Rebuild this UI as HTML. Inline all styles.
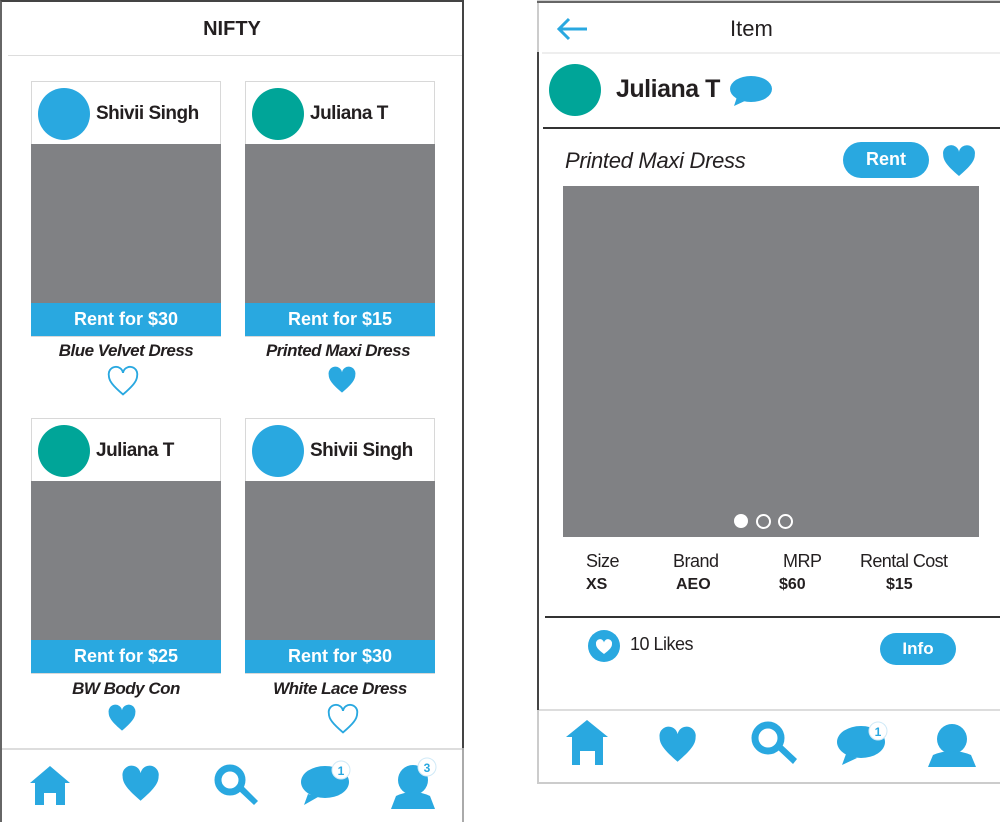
<!DOCTYPE html>
<html><head><meta charset="utf-8"><style>
*{margin:0;padding:0;box-sizing:border-box}
body{width:1000px;height:822px;background:#fff;position:relative;overflow:hidden;font-family:"Liberation Sans",sans-serif;color:#231f20}
.a{position:absolute}
.t{position:absolute;white-space:nowrap}
.card{position:absolute;width:190px;height:256px;border:1px solid #d8d8d8;background:#fff}
.card .av{position:absolute;left:6px;top:6px;width:52px;height:52px;border-radius:50%}
.card .nm{position:absolute;left:64px;top:21px;font-size:19px;font-weight:bold;letter-spacing:-0.5px}
.card .img{position:absolute;left:-1px;top:62px;width:190px;height:160px;background:#808184}
.card .bar{position:absolute;left:-1px;top:221px;width:190px;height:33px;background:#29a8e0;color:#fff;font-size:18px;font-weight:bold;text-align:center;line-height:33px}
.cap{position:absolute;width:190px;text-align:center;font-size:17px;font-style:italic;font-weight:bold;letter-spacing:-0.5px}
</style></head><body>
<svg width="0" height="0" style="position:absolute"><defs>
<path id="h" d="M12 21.5C5 15.5 2 12 2 8a5 5 0 0 1 10-1.8A5 5 0 0 1 22 8c0 4-3 7.5-10 13.5z"/>
</defs></svg>

<!-- LEFT PHONE -->
<div class="a" style="left:0;top:0;width:464px;height:822px;border:2px solid #444;border-bottom:none;border-left:2px solid #666"></div>
<div class="a" style="left:462px;top:748px;width:2px;height:74px;background:#aaa"></div>
<div class="t" style="left:0;width:464px;text-align:center;top:18px;font-size:20px;font-weight:bold">NIFTY</div>
<div class="a" style="left:8px;top:55px;width:454px;height:1px;background:#ddd"></div>

<div class="card" style="left:31px;top:81px"><div class="av" style="background:#29a8e0"></div><div class="nm">Shivii Singh</div><div class="img"></div><div class="bar">Rent for $30</div></div>
<div class="cap" style="left:31px;top:341px">Blue Velvet Dress</div>
<svg class="a" style="left:106px;top:364px" width="34" height="34" viewBox="0 0 24 24"><use href="#h" fill="none" stroke="#29a8e0" stroke-width="1.3"/></svg>

<div class="card" style="left:245px;top:81px"><div class="av" style="background:#00a598"></div><div class="nm">Juliana T</div><div class="img"></div><div class="bar">Rent for $15</div></div>
<div class="cap" style="left:243px;top:341px">Printed Maxi Dress</div>
<svg class="a" style="left:326px;top:364px" width="32" height="32" viewBox="0 0 24 24"><use href="#h" fill="#29a8e0"/></svg>

<div class="card" style="left:31px;top:418px"><div class="av" style="background:#00a598"></div><div class="nm">Juliana T</div><div class="img"></div><div class="bar">Rent for $25</div></div>
<div class="cap" style="left:31px;top:679px">BW Body Con</div>
<svg class="a" style="left:106px;top:702px" width="32" height="32" viewBox="0 0 24 24"><use href="#h" fill="#29a8e0"/></svg>

<div class="card" style="left:245px;top:418px"><div class="av" style="background:#29a8e0"></div><div class="nm">Shivii Singh</div><div class="img"></div><div class="bar">Rent for $30</div></div>
<div class="cap" style="left:245px;top:679px">White Lace Dress</div>
<svg class="a" style="left:326px;top:702px" width="34" height="34" viewBox="0 0 24 24"><use href="#h" fill="none" stroke="#29a8e0" stroke-width="1.3"/></svg>

<div class="a" style="left:2px;top:748px;width:460px;height:2px;background:#ddd"></div>
<svg class="a" style="left:0;top:750px" width="462" height="72" viewBox="0 0 462 72">
 <g fill="#29a8e0">
  <path d="M30 33 L50 16 L70 33 L65 33 L65 55 L56 55 L56 43 L44 43 L44 55 L35 55 L35 33 Z"/>
  <use href="#h" transform="translate(119 12) scale(1.8)"/>
  <circle cx="230" cy="30" r="12" fill="none" stroke="#29a8e0" stroke-width="7"/>
  <path d="M238 40 L254 55 L258 51 L243 36 Z"/>
  <ellipse cx="325" cy="32" rx="24" ry="16"/>
  <path d="M308 44 L304 55 L318 47 Z"/>
  <circle cx="341" cy="20" r="9" fill="#fff" stroke="#cfe9f7" stroke-width="1"/>
  <circle cx="413" cy="30" r="15"/>
  <path d="M391 59 L396 46 Q413 38 430 46 L435 59 Z"/>
  <circle cx="427" cy="17" r="9" fill="#fff" stroke="#cfe9f7" stroke-width="1"/>
 </g>
 <text x="341" y="25" font-family="Liberation Sans" font-weight="bold" font-size="12" fill="#29a8e0" text-anchor="middle">1</text>
 <text x="427" y="22" font-family="Liberation Sans" font-weight="bold" font-size="12" fill="#29a8e0" text-anchor="middle">3</text>
</svg>

<!-- RIGHT PHONE -->
<div class="a" style="left:537px;top:0;width:463px;height:784px;border:2px solid #ccc;border-right:none"></div>
<div class="a" style="left:537px;top:52px;width:2px;height:658px;background:#444"></div>
<div class="a" style="left:537px;top:1px;width:463px;height:2px;background:#666"></div>
<svg class="a" style="left:555px;top:16px" width="34" height="26" viewBox="0 0 34 26"><path d="M32 13 H4 M14 3 L4 13 L14 23" fill="none" stroke="#29a8e0" stroke-width="3"/></svg>
<div class="t" style="left:730px;top:16px;font-size:22px">Item</div>
<div class="a" style="left:542px;top:52px;width:458px;height:2px;background:#eee"></div>
<div class="a" style="left:549px;top:64px;width:52px;height:52px;border-radius:50%;background:#00a598"></div>
<div class="t" style="left:616px;top:75px;font-size:25px;font-weight:bold;letter-spacing:-0.5px">Juliana T</div>
<svg class="a" style="left:729px;top:73px" width="44" height="34" viewBox="0 0 44 34"><ellipse cx="22" cy="16" rx="21" ry="13" fill="#29a8e0"/><path d="M8 24 L5 33 L18 27 Z" fill="#29a8e0"/></svg>
<div class="a" style="left:543px;top:127px;width:457px;height:2px;background:#333"></div>
<div class="t" style="left:565px;top:148px;font-size:22px;font-style:italic;letter-spacing:-0.3px">Printed Maxi Dress</div>
<div class="a" style="left:843px;top:142px;width:86px;height:36px;border-radius:18px;background:#29a8e0;color:#fff;font-weight:bold;font-size:18px;text-align:center;line-height:35px">Rent</div>
<svg class="a" style="left:940px;top:142px" width="38" height="38" viewBox="0 0 24 24"><use href="#h" fill="#29a8e0"/></svg>
<div class="a" style="left:563px;top:186px;width:416px;height:351px;background:#808184"></div>
<div class="a" style="left:734px;top:514px;width:14px;height:14px;border-radius:50%;background:#fff"></div>
<div class="a" style="left:756px;top:514px;width:15px;height:15px;border-radius:50%;border:2px solid #fff"></div>
<div class="a" style="left:778px;top:514px;width:15px;height:15px;border-radius:50%;border:2px solid #fff"></div>

<div class="t" style="left:586px;top:551px;font-size:18px;letter-spacing:-0.5px">Size</div>
<div class="t" style="left:586px;top:576px;font-size:16px;font-weight:bold">XS</div>
<div class="t" style="left:673px;top:551px;font-size:18px;letter-spacing:-0.5px">Brand</div>
<div class="t" style="left:676px;top:576px;font-size:16px;font-weight:bold">AEO</div>
<div class="t" style="left:783px;top:551px;font-size:18px;letter-spacing:-0.5px">MRP</div>
<div class="t" style="left:779px;top:576px;font-size:16px;font-weight:bold">$60</div>
<div class="t" style="left:860px;top:551px;font-size:18px;letter-spacing:-0.6px">Rental Cost</div>
<div class="t" style="left:886px;top:576px;font-size:16px;font-weight:bold">$15</div>

<div class="a" style="left:545px;top:616px;width:455px;height:2px;background:#333"></div>
<svg class="a" style="left:587px;top:629px" width="34" height="34" viewBox="0 0 34 34"><circle cx="17" cy="17" r="16" fill="#29a8e0"/><path d="M17 25C11 20.5 9 18 9 15a4 4 0 0 1 8-1.5A4 4 0 0 1 25 15c0 3-2 5.5-8 10z" fill="#fff"/></svg>
<div class="t" style="left:630px;top:634px;font-size:18px;letter-spacing:-0.5px">10 Likes</div>
<div class="a" style="left:880px;top:633px;width:76px;height:32px;border-radius:16px;background:#29a8e0;color:#fff;font-weight:bold;font-size:17px;text-align:center;line-height:32px">Info</div>

<div class="a" style="left:539px;top:709px;width:461px;height:2px;background:#ddd"></div>
<svg class="a" style="left:539px;top:711px" width="461" height="72" viewBox="0 0 461 72">
 <g fill="#29a8e0">
  <path d="M27 26 L48 9 L69 26 L64 26 L64 54 L56 54 L56 40 L41 40 L41 54 L33 54 L33 26 Z"/>
  <use href="#h" transform="translate(117 12) scale(1.8)"/>
  <circle cx="229" cy="27" r="13" fill="none" stroke="#29a8e0" stroke-width="7"/>
  <path d="M237 37 L254 53 L258 48 L242 33 Z"/>
  <ellipse cx="322" cy="31" rx="24" ry="16"/>
  <path d="M307 43 L303 54 L318 47 Z"/>
  <circle cx="339" cy="20" r="9" fill="#fff" stroke="#cfe9f7" stroke-width="1"/>
  <circle cx="413" cy="28" r="15"/>
  <path d="M389 56 L394 44 Q413 36 432 44 L437 56 Z"/>
 </g>
 <text x="339" y="25" font-family="Liberation Sans" font-weight="bold" font-size="12" fill="#29a8e0" text-anchor="middle">1</text>
</svg>
</body></html>
